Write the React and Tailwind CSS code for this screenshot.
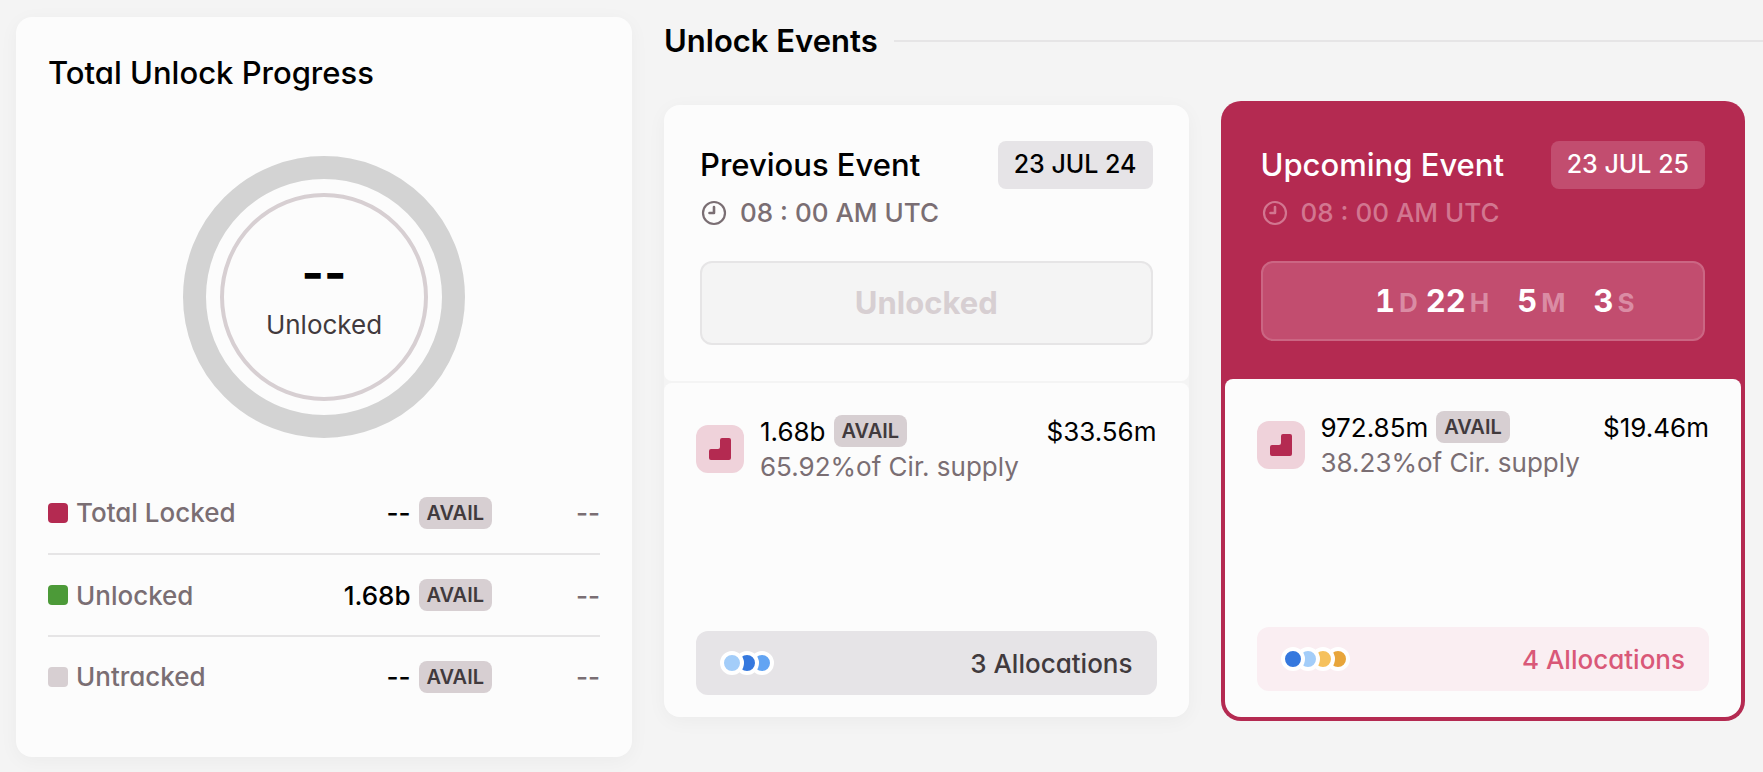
import clsx from "clsx"

const totals = [
  { label: "Total Locked", color: "bg-[#b42a51]", amount: "--", value: "--" },
  { label: "Unlocked", color: "bg-[#4c9a38]", amount: "1.68b", value: "--" },
  { label: "Untracked", color: "bg-[#d7cfd2]", amount: "--", value: "--" },
]

const countdown = [
  { value: 1, unit: "D" },
  { value: 22, unit: "H" },
  { value: 5, unit: "M" },
  { value: 3, unit: "S" },
]

function TokenBadge() {
  return (
    <span className="inline-flex h-8 items-center rounded-lg bg-[#d7cfd2] px-2 text-xl font-semibold text-[#413a3d]">
      AVAIL
    </span>
  )
}

function ClockIcon() {
  return (
    <svg className="size-7" viewBox="0 0 28 28" fill="none" stroke="currentColor" strokeWidth="2.2" strokeLinejoin="round">
      <circle cx="14" cy="14" r="11" />
      <path d="M14 8v6H9.5" strokeWidth="2.6" strokeLinecap="round" />
    </svg>
  )
}

function CliffIcon() {
  return (
    <div className="flex size-12 shrink-0 items-center justify-center rounded-xl bg-[#efd2da]">
      <svg className="size-[22px]" viewBox="0 0 22 22" fill="#b42a51">
        <path d="M13 0h7a2 2 0 0 1 2 2v18a2 2 0 0 1-2 2H2a2 2 0 0 1-2-2v-7a2 2 0 0 1 2-2h7a2 2 0 0 0 2-2V2a2 2 0 0 1 2-2Z" />
      </svg>
    </div>
  )
}

function Dots({ colors }) {
  return (
    <span className="flex">
      {colors.map((color, i) => (
        <span
          key={color}
          className={clsx("relative size-6 rounded-full border-4 border-white", color, i > 0 && "-ml-[9px]")}
          style={{ zIndex: colors.length - i }}
        />
      ))}
    </span>
  )
}

function TotalProgress() {
  return (
    <section className="rounded-2xl bg-[#fcfcfc] px-8 pt-9 pb-[41px] shadow-[0_4px_20px_rgba(0,0,0,0.04)]">
      <h2 className="text-[31px] leading-10 font-medium">Total Unlock Progress</h2>
      <div className="mt-[63px] grid place-items-center">
        <svg className="col-start-1 row-start-1 size-[282px]" viewBox="0 0 282 282" fill="none">
          <circle cx="141" cy="141" r="129.5" stroke="#d3d3d3" strokeWidth="23" />
          <circle cx="141" cy="141" r="102" stroke="#d7cfd2" strokeWidth="4" />
        </svg>
        <div className="col-start-1 row-start-1 flex flex-col items-center gap-1 pb-2">
          <span className="text-5xl leading-[60px] font-bold">--</span>
          <span className="text-[26px] leading-9 text-[#413a3d]">Unlocked</span>
        </div>
      </div>
      <table className="mt-[34px] w-full text-[26px] font-medium">
        <tbody>
          {totals.map((row) => (
            <tr key={row.label} className="h-[82px] border-b-2 border-[#e6e5e6] last:h-20 last:border-b-0">
              <th scope="row" className="text-left font-medium text-[#7a6e73]">
                <span className="flex items-center gap-2">
                  <span className={clsx("size-5 rounded", row.color)} />
                  {row.label}
                </span>
              </th>
              <td>
                <span className="flex items-center justify-end gap-2">
                  {row.amount}
                  <TokenBadge />
                </span>
              </td>
              <td className="w-[108px] text-right text-[#7a6e73]">{row.value}</td>
            </tr>
          ))}
        </tbody>
      </table>
    </section>
  )
}

function EventHeader({ title, date, time, upcoming }) {
  return (
    <>
      <div className="flex items-center justify-between">
        <h3 className="text-[31px] leading-10 font-medium">{title}</h3>
        <span
          className={clsx(
            "flex h-12 items-center rounded-lg px-4 text-[25px] font-medium",
            upcoming ? "bg-[#c24d6f]" : "bg-[#e6e4e7]"
          )}
        >
          {date}
        </span>
      </div>
      <div
        className={clsx(
          "mt-1.5 flex items-center gap-3 text-[26px] leading-9 font-medium",
          upcoming ? "text-[#d27690]" : "text-[#7a6e73]"
        )}
      >
        <ClockIcon />
        {time}
      </div>
    </>
  )
}

function EventBody({ amount, supply, value, dots, count, upcoming }) {
  return (
    <>
      <div className="flex items-center gap-4">
        <CliffIcon />
        <div className="min-w-0 flex-1 text-[26px]">
          <div className="flex h-8 items-center gap-2">
            {amount}
            <TokenBadge />
            <span className="ml-auto">{value}</span>
          </div>
          <p className="mt-1 leading-8 text-[#7a6e73]">{supply}of Cir. supply</p>
        </div>
      </div>
      <button
        type="button"
        className={clsx(
          "mt-auto flex h-16 items-center justify-between rounded-xl px-6 text-[26px] font-medium",
          upcoming ? "bg-[#faeef2] text-[#d95878]" : "bg-[#e6e4e7] text-[#413a3d]"
        )}
      >
        <Dots colors={dots} />
        {count} Allocations
      </button>
    </>
  )
}

function PreviousEvent() {
  return (
    <article className="flex flex-col gap-0.5 rounded-2xl shadow-[0_4px_20px_rgba(0,0,0,0.04)]">
      <div className="rounded-t-2xl rounded-b-lg bg-[#fcfcfc] px-9 py-9">
        <EventHeader title="Previous Event" date="23 JUL 24" time="08 : 00 AM UTC" />
        <div className="mt-[30px] flex h-[84px] items-center justify-center rounded-xl border-2 border-[#e6e5e6] bg-[#f4f4f4] text-[31px] font-bold text-[#d7cfd2]">
          Unlocked
        </div>
      </div>
      <div className="flex h-[334px] flex-col rounded-t-lg rounded-b-2xl bg-[#fcfcfc] px-8 pt-8 pb-[22px]">
        <EventBody
          amount="1.68b"
          supply="65.92%"
          value="$33.56m"
          dots={["bg-[#a3cdf9]", "bg-[#3578de]", "bg-[#62a4f3]"]}
          count={3}
        />
      </div>
    </article>
  )
}

function UpcomingEvent() {
  return (
    <article className="rounded-[20px] bg-[#b42a51] p-1">
      <div className="px-9 pt-9 pb-[38px] text-white">
        <EventHeader title="Upcoming Event" date="23 JUL 25" time="08 : 00 AM UTC" upcoming />
        <div className="mt-[30px] flex h-20 items-center justify-center gap-2 rounded-xl border-2 border-[#cb6683] bg-[#c24d6f] pl-6 tabular-nums">
          {countdown.map(({ value, unit }) => (
            <span key={unit} className="flex items-baseline gap-1">
              <span className="w-10 text-right text-[31px] font-bold">{value}</span>
              <span className="text-[26px] font-bold text-[#da8ca4]">{unit}</span>
            </span>
          ))}
        </div>
      </div>
      <div className="flex h-[338px] flex-col rounded-t-lg rounded-b-2xl bg-[#fcfcfc] px-8 pt-8 pb-[26px]">
        <EventBody
          amount="972.85m"
          supply="38.23%"
          value="$19.46m"
          dots={["bg-[#3578de]", "bg-[#a3cdf9]", "bg-[#f6c15c]", "bg-[#e8a53a]"]}
          count={4}
          upcoming
        />
      </div>
    </article>
  )
}

export default function App() {
  return (
    <main className="grid min-h-screen grid-cols-[616fr_1099fr] items-start gap-8 overflow-hidden bg-[#f4f4f4] pt-[17px] pb-[15px] pl-4 font-['Inter',sans-serif] text-black [font-feature-settings:'cv11']">
      <TotalProgress />
      <section className="min-w-0">
        <div className="flex items-center gap-4 pt-1">
          <h2 className="text-[31px] leading-10 font-semibold">Unlock Events</h2>
          <div className="h-0.5 flex-1 bg-[#e6e5e6]" />
        </div>
        <div className="mt-10 grid grid-cols-2 items-center gap-8 pr-[18px]">
          <PreviousEvent />
          <UpcomingEvent />
        </div>
      </section>
    </main>
  )
}
